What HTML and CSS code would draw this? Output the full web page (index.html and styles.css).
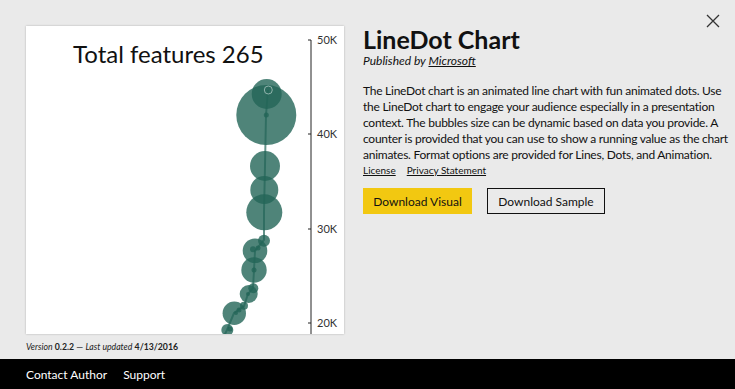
FILE: index.html
```html
<!DOCTYPE html>
<html lang="en">
<head>
    <meta charset="utf-8"/>
    <title>LineDot Chart</title>
    <link rel="stylesheet" href="styles.css">
</head>
<body>

<div class="detail">
    <button class="detail__close" aria-label="Close">
        <svg width="14" height="14" viewBox="0 0 14 14">
            <path d="M1 1 L13 13 M13 1 L1 13" stroke="#333" stroke-width="1.3" fill="none"/>
        </svg>
    </button>

    <div class="detail__body">
        <div class="detail__preview">
            <div class="preview_card">
                <svg width="318" height="308" viewBox="0 0 318 308">
                    <text class="chart_title" x="47" y="37">Total features 265</text>

                    <!-- y axis -->
                    <line x1="285" y1="14" x2="285" y2="308" stroke="#222" stroke-width="1"/>
                    <line x1="282" y1="14" x2="285" y2="14" stroke="#222"/>
                    <line x1="282" y1="108" x2="285" y2="108" stroke="#222"/>
                    <line x1="282" y1="203" x2="285" y2="203" stroke="#222"/>
                    <line x1="282" y1="297" x2="285" y2="297" stroke="#222"/>
                    <text class="chart_tick" x="291" y="18">50K</text>
                    <text class="chart_tick" x="291" y="112">40K</text>
                    <text class="chart_tick" x="291" y="207">30K</text>
                    <text class="chart_tick" x="291" y="301">20K</text>

                    <!-- line -->
                    <path class="chart_line" d="M242 64 L240 89 L239 140 L238 186 L238 214 L229 225 L228 244 L227 262 L222 268 L218 280 L208 287 L201 304 L198 310"/>

                    <!-- bubbles -->
                    <g class="chart_dots">
                        <circle cx="240.7" cy="68" r="15"/>
                        <circle cx="240.3" cy="89" r="30"/>
                        <circle cx="240.3" cy="89" r="2.5"/>
                        <circle cx="239" cy="140" r="15"/>
                        <circle cx="238.3" cy="164" r="14"/>
                        <circle cx="238.3" cy="186.3" r="18"/>
                        <circle cx="238" cy="214.7" r="6"/>
                        <circle cx="229" cy="224.7" r="12.3"/>
                        <circle cx="227" cy="223.3" r="3"/>
                        <circle cx="232" cy="222" r="2.5"/>
                        <circle cx="228" cy="244" r="12.7"/>
                        <circle cx="228" cy="244" r="2.5"/>
                        <circle cx="227.3" cy="262.3" r="5"/>
                        <circle cx="222.7" cy="268" r="9"/>
                        <circle cx="222" cy="268" r="2"/>
                        <circle cx="218" cy="279.7" r="4"/>
                        <circle cx="213" cy="284" r="2.5"/>
                        <circle cx="208.3" cy="287.3" r="11.7"/>
                        <circle cx="210" cy="287" r="2"/>
                        <circle cx="201.3" cy="304" r="6"/>
                        <circle cx="204" cy="303" r="2.5"/>
                    </g>
                    <circle cx="242.3" cy="64" r="4" fill="none" stroke="#8fb3ab" stroke-width="1"/>
                </svg>
            </div>
            <p class="detail__version">
                <em>Version</em> <strong>0.2.2</strong> — <em>Last updated</em> <strong>4/13/2016</strong>
            </p>
        </div>

        <div class="detail__info">
            <h1 class="detail__title">LineDot Chart</h1>
            <p class="detail__publisher">Published by <a href="#">Microsoft</a></p>
            <p class="detail__description">
                The LineDot chart is an animated line chart with fun animated dots. Use the LineDot chart to engage
                your audience especially in a presentation context. The bubbles size can be dynamic based on data
                you provide. A counter is provided that you can use to show a running value as the chart animates.
                Format options are provided for Lines, Dots, and Animation.
            </p>
            <div class="detail__links">
                <a href="#">License</a>
                <a href="#">Privacy Statement</a>
            </div>
            <div class="detail__actions">
                <button class="button button--primary">Download Visual</button>
                <button class="button button--outline">Download Sample</button>
            </div>
        </div>
    </div>
</div>

<div class="footer">
    <a href="#">Contact Author</a>
    <a href="#">Support</a>
</div>

</body>
</html>
```

FILE: styles.css
```css
html {
    height: 100%;
}

body {
    margin: 0;
    height: 100%;
    background-color: #eaeaea;
    font-family: Lato, "Open Sans", sans-serif;
    color: #111;

    display: flex;
    flex-direction: column;
}

.detail {
    flex-grow: 1;
    position: relative;
}

.detail__close {
    position: absolute;
    top: 14px;
    right: 15px;
    padding: 0;
    border: none;
    background: none;
    width: 14px;
    height: 14px;
}

.detail__body {
    display: flex;
    gap: 19px;
    padding: 26px 0 0 26px;
}

.detail__preview {
    width: 318px;
}

.preview_card {
    width: 318px;
    height: 308px;
    background-color: #fff;
    box-shadow: 0 0 2px rgba(0, 0, 0, 0.25);
    overflow: hidden;
}

.preview_card svg {
    display: block;
}

.chart_title {
    font-family: Lato, sans-serif;
    font-size: 24px;
    fill: #111;
}

.chart_tick {
    font-family: Lato, sans-serif;
    font-size: 11px;
    fill: #333;
}

.chart_line {
    fill: none;
    stroke: rgb(35, 101, 88);
    stroke-opacity: 0.7;
    stroke-width: 2;
}

.chart_dots circle {
    fill: rgb(35, 101, 88);
    fill-opacity: 0.8;
}

.detail__version {
    margin: 7px 0 0 0;
    font-size: 8.7px;
    color: #222;
}

.detail__info {
    width: 372px;
}

.detail__title {
    margin: -1px 0 0 0;
    font-size: 25px;
    font-weight: 700;
    line-height: 28px;
}

.detail__publisher {
    margin: 0;
    font-size: 12px;
    font-style: italic;
    line-height: 16px;
}

.detail__publisher a {
    color: inherit;
}

.detail__description {
    margin: 14px 0 0 0;
    font-size: 12px;
    letter-spacing: -0.25px;
    line-height: 16px;
    color: #111;
}

.detail__links {
    display: flex;
    gap: 11px;
    margin-top: 1px;
    font-size: 10px;
}

.detail__links a {
    color: #111;
}

.detail__actions {
    display: flex;
    gap: 15px;
    margin-top: 12px;
}

.button {
    height: 26px;
    padding: 0;
    font-family: inherit;
    font-size: 12px;
    color: #111;
    white-space: nowrap;
    cursor: pointer;
}

.button--primary {
    width: 109px;
    background-color: #f2c811;
    border: none;
}

.button--outline {
    width: 118px;
    background-color: transparent;
    border: 1px solid #111;
}

.footer {
    height: 30px;
    background-color: #000;
    display: flex;
    align-items: center;
    gap: 16px;
    padding-left: 26px;
}

.footer a {
    color: #fff;
    text-decoration: none;
    font-size: 12px;
}
```
